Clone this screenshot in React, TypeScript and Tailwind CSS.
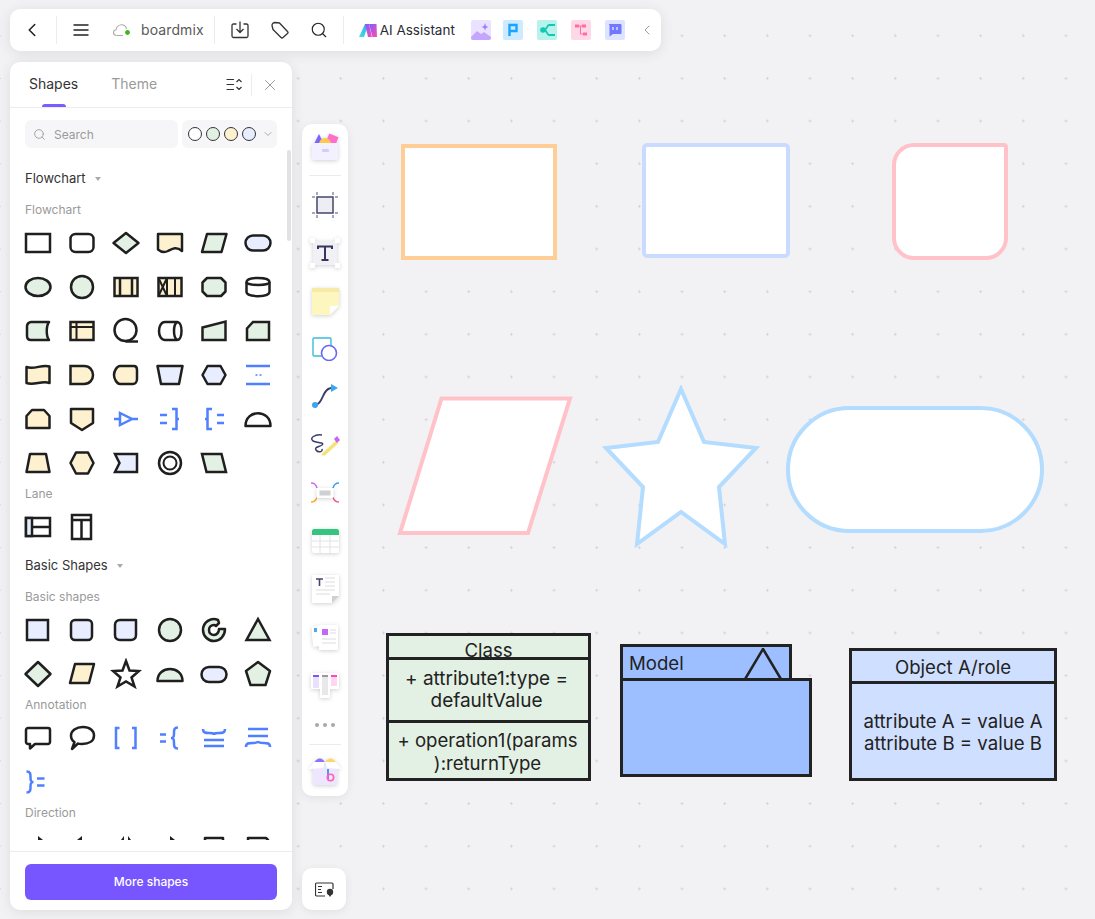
import type { ReactNode } from "react";
import { ChevronDown, ChevronLeft, Search, X } from "lucide-react";

const G = "#e3f1e4";
const Y = "#fdf1d0";
const B = "#e8eeff";
const W = "#ffffff";
const L = "#4f80ff";

function Shape({ children }: { children: ReactNode }) {
  return (
    <div className="flex h-11 w-11 items-center justify-center">
      <svg viewBox="0 0 32 32" className="h-8 w-8" fill="none" stroke="#1f1f1f" strokeWidth={2.500} strokeLinejoin="round">
        {children}
      </svg>
    </div>
  );
}

function Blue({ d }: { d: string }) {
  return <path d={d} stroke={L} strokeWidth={2.500} fill="none" strokeLinejoin="miter" />;
}

const flowchart: ReactNode[] = [
  <rect x="4" y="7" width="24" height="18" fill={W} strokeLinejoin="miter" />,
  <rect x="4.5" y="7" width="23" height="18" rx="5" fill={W} />,
  <path d="M3.5 16 16 6 28.5 16 16 26Z" fill={G} />,
  <path d="M4 7H28V24C22 19 18 22 14 24 10 26 7 25 4 22.5Z" fill={Y} />,
  <path d="M9 7H28.5L23.5 25H4Z" fill={G} />,
  <rect x="3.5" y="8.5" width="25" height="15" rx="7.5" fill={B} />,
  <ellipse cx="16" cy="16" rx="12.5" ry="9" fill={G} />,
  <circle cx="16" cy="16" r="11" fill={G} />,
  <>
    <rect x="4.5" y="7" width="23" height="18" fill={Y} strokeLinejoin="miter" />
    <path d="M10 7V25M22 7V25" />
  </>,
  <>
    <rect x="4.5" y="7" width="23" height="18" fill={Y} strokeLinejoin="miter" />
    <path d="M13 7V25M21 7V25M4.5 7 13 25M13 7 4.5 25" strokeWidth={2} />
  </>,
  <path d="M9 7H23L27.5 11.5V20.5L23 25H9L4.5 20.5V11.5Z" fill={G} />,
  <>
    <path d="M4.5 11C4.5 5.500 27.500 5.500 27.500 11V21C27.500 26.500 4.500 26.500 4.500 21Z" fill={W} />
    <path d="M4.5 11C4.5 15 27.500 15 27.500 11" />
  </>,
  <path d="M9 7H27C24 11 24 21 27 25H9C7 25 5 24 5 21V11C5 9 7 7 9 7Z" fill={G} />,
  <>
    <rect x="4.5" y="7" width="23" height="18" fill={Y} strokeLinejoin="miter" />
    <path d="M4.500 12H27.500M10.500 7V25" strokeWidth={2} />
  </>,
  <>
    <circle cx="15.500" cy="15" r="11" fill={W} />
    <path d="M15.500 26.500H28" />
  </>,
  <>
    <path d="M11 7H23C29 7 29 25 23 25H11C3 25 3 7 11 7Z" fill={W} />
    <path d="M23 7C19 10 19 22 23 25" />
  </>,
  <path d="M4.500 12.500 27.500 6.500V25H4.500Z" fill={G} strokeLinejoin="miter" />,
  <path d="M11 7H27V25H5V13.500Z" fill={G} strokeLinejoin="miter" />,
  <path d="M4.500 8C12 11 20 5 27.500 7.500V24C20 21 12 27 4.500 24Z" fill={Y} />,
  <path d="M4.500 7H18C30 7 30 25 18 25H4.500Z" fill={Y} strokeLinejoin="miter" />,
  <path d="M10 7H24C26 7 27 9 27 11V20C27 23 25 25 23 25H10C7 25 4 20 4 16 4 12 7 7 10 7Z" fill={Y} />,
  <path d="M3.500 7H28.500L25 25H7Z" fill={B} />,
  <path d="M9.500 7H22.500L27.500 16 22.500 25H9.500L4.500 16Z" fill={B} />,
  <>
    <Blue d="M4 7H28M4 25H28" />
    <path d="M13.500 16H15.500M17.500 16H19.500" stroke={L} strokeWidth={1.600} />
  </>,
  <path d="M10 7H22L27.500 13V25H4.500V13Z" fill={Y} />,
  <path d="M5 6H27V20L16 27 5 20Z" fill={Y} />,
  <>
    <Blue d="M4 16H10M22 16H28M10 10 22 16 10 22Z" />
  </>,
  <>
    <Blue d="M6 12H13M6 20H13M18 6H22.500V26H18M22.500 16H25" />
  </>,
  <>
    <Blue d="M14 6H9.500V26H14M9.500 16H7M19 12H26M19 20H26" />
  </>,
  <path d="M3.500 23C3.500 6 28.500 6 28.500 23Z" fill={W} />,
  <path d="M8 7H24L27.500 25H4.500Z" fill={Y} />,
  <path d="M10 5.500H22L27.500 16 22 26.500H10L4.500 16Z" fill={Y} />,
  <path d="M5 7H27V25H5L9.500 16Z" fill={B} strokeLinejoin="miter" />,
  <>
    <circle cx="16" cy="16" r="11" fill={W} />
    <circle cx="16" cy="16" r="6.500" fill={W} strokeWidth={2} />
  </>,
  <path d="M4 7H23.500L28 25H8.500Z" fill={G} strokeLinejoin="miter" />,
];

const lane: ReactNode[] = [
  <>
    <rect x="4" y="7" width="24" height="18" fill={W} strokeLinejoin="miter" />
    <rect x="4" y="7" width="6" height="18" fill={B} strokeLinejoin="miter" />
    <path d="M10 16H28" />
  </>,
  <>
    <rect x="6" y="4" width="19" height="24" fill={W} strokeLinejoin="miter" />
    <path d="M6 9H25M15.500 9V28" />
  </>,
];

const basic: ReactNode[] = [
  <rect x="5" y="6" width="21" height="20" fill={B} strokeLinejoin="miter" />,
  <rect x="5" y="6" width="21" height="20" rx="4" fill={B} />,
  <path d="M10 6H26V21C26 24 24 26 21 26H10C7 26 5 24 5 21V11C5 8 7 6 10 6Z" fill={B} />,
  <circle cx="16" cy="16" r="11" fill={G} />,
  <path d="M20 6C13 3 5 8 5 16 5 22 10 27 16 27 22 27 27 22 27 15H21C21 18 19 21 16 21 13 21 11 19 11 16 11 13 13 11 16 11 17 11 18 12 18 12L21 9Z" fill={G} />,
  <path d="M16 5 27.500 26H4.500Z" fill={G} strokeLinejoin="miter" />,
  <path d="M3.500 16 16 4 28.500 16 16 28Z" fill={G} />,
  <path d="M9 6H28L23 25H4Z" fill={Y} />,
  <path d="M16 3 19.500 12.500 29 13 21.500 19.500 24.500 28.500 16 23.500 7.500 28.500 10.500 19.500 3 13 12.500 12.500Z" fill={W} strokeLinejoin="miter" />,
  <path d="M3.500 23C3.500 7 28.500 7 28.500 23Z" fill={G} />,
  <rect x="3.500" y="9" width="25" height="15" rx="7.500" fill={B} />,
  <path d="M16 4 28 13 23.500 27H8.500L4 13Z" fill={G} />,
];

const annotation: ReactNode[] = [
  <path d="M6 6H26C27.500 6 28 7 28 8V20C28 21 27 22 26 22H13L8 26.500V22H6C5 22 4 21 4 20V8C4 7 5 6 6 6Z" fill={W} />,
  <path d="M17 5C24 5 28 9 28 13.500 28 19 23 22 16 22 14 22 13 22 12 21.500L6 27 8.500 20C6 18.500 5 16 5 13.500 5 9 10 5 17 5Z" fill={W} />,
  <Blue d="M9.500 6H6V26H9.500M22 6H25.500V26H22" />,
  <Blue d="M6 12.500H12M6 19.500H12M24 5.500C20 5.500 20 8 20 11 20 14 20 16 17 16 20 16 20 18 20 21 20 24 20 26.500 24 26.500" />,
  <Blue d="M5 7C5 11 8 11 11 11 14 11 16 11 16 13 16 11 18 11 21 11 24 11 27 11 27 7M6 18H26M6 24H26" />,
  <Blue d="M6 7H26M6 14H26M4 25C4 21 7 21 10 21 13 21 16 21 16 19 16 21 19 21 22 21 25 21 28 21 28 25" />,
  <Blue d="M4.500 5.500C8.500 5.500 8.500 8 8.500 11 8.500 14 8.500 16 11.500 16 8.500 16 8.500 18 8.500 21 8.500 24 8.500 26.500 4.500 26.500M15 12.500H22.500M15 19.500H22.500" />,
];

const direction: ReactNode[] = [
  <path d="M16 4 26 12H16Z" fill="#1f1f1f" stroke="none" />,
  <path d="M16 4 6 12H16Z" fill="#1f1f1f" stroke="none" />,
  <path d="M14 4 8 12H14ZM18 4 24 12H18Z" fill="#1f1f1f" stroke="none" />,
  <path d="M16 4 26 12H16Z" fill="#1f1f1f" stroke="none" />,
  <path d="M7 6H25V20H7Z" fill={W} />,
  <path d="M6 6H24L26 8V20H6Z" fill={W} />,
];

function ShapeGrid({ items }: { items: ReactNode[] }) {
  return (
    <div className="grid grid-cols-[repeat(6,44px)] pl-[6px]">
      {items.map((s, i) => (
        <Shape key={i}>{s}</Shape>
      ))}
    </div>
  );
}

function Heading({ children, caretAt, className }: { children: string; caretAt?: boolean; className?: string }) {
  return (
    <div className={`flex h-5 items-center gap-[9px] pl-[15px] text-[13px] text-[#333] ${className ?? ""}`}>
      {children}
      {caretAt && <span className="h-0 w-0 border-x-[3px] border-t-4 border-x-transparent border-t-[#aaa]" />}
    </div>
  );
}

function SubLabel({ children, className }: { children: string; className?: string }) {
  return <div className={`flex h-5 items-center pb-[2px] pl-[15px] text-xs text-[#9a9a9a] ${className ?? ""}`}>{children}</div>;
}

function Divider() {
  return <div className="h-[28px] w-px bg-[#ececee]" />;
}

function TopBar() {
  return (
    <div className="flex h-[42px] w-[651px] items-center rounded-[10px] bg-white pl-[11px] text-[#222] shadow-[0_2px_14px_rgba(0,0,0,0.09)]">
      <ChevronLeft size={22} strokeWidth={1.700} />
      <div className="ml-[13px]"><Divider /></div>
      <svg viewBox="0 0 16 12" className="ml-[16px] h-3 w-4" stroke="#222" strokeWidth={1.300}>
        <path d="M.5 1H15.500M.5 6H15.500M.5 11H15.500" />
      </svg>
      <svg viewBox="0 0 18 13" className="ml-[24px] h-[13px] w-[18px]" fill="none">
        <path d="M3.500 11.500C1.500 11.500.5 10 .5 8.500.5 7 1.500 6 3 5.800 3.500 3 6 .8 8.500.8 11 .8 13 2.500 13.500 5" stroke="#aaa" strokeWidth={1.100} />
        <path d="M3.500 11.500H10" stroke="#aaa" strokeWidth={1.100} />
        <circle cx="14.500" cy="8.500" r="2.400" fill="#3eb61b" />
      </svg>
      <span className="ml-[10px] text-sm tracking-[0.1px] text-[#5a5a5a]">boardmix</span>
      <div className="ml-[10px]"><Divider /></div>
      <svg viewBox="0 0 18 18" className="ml-[16px] h-[18px] w-[18px]" fill="none" stroke="#333" strokeWidth={1.300}>
        <path d="M5.500 3H2.500C1.500 3 1 3.500 1 4.500V15C1 16 1.500 16.500 2.500 16.500H15.500C16.500 16.500 17 16 17 15V4.500C17 3.500 16.500 3 15.500 3H12.500" />
        <path d="M9 .5V11.500M5.500 8 9 11.500 12.500 8" />
      </svg>
      <svg viewBox="0 0 18 18" className="ml-[22px] h-[18px] w-[18px]" fill="none" stroke="#333" strokeWidth={1.300} strokeLinejoin="round">
        <path d="M1 4.500C1 2.500 2.500 1.500 4 1.500L8.500 2 16.500 10.500C17 11 17 12 16.500 12.500L12 16.500C11.500 17 10.500 17 10 16.500L2 8.500Z" />
      </svg>
      <Search size={18} strokeWidth={1.500} className="ml-[21px] text-[#222]" />
      <div className="ml-[15px]"><Divider /></div>
      <svg viewBox="0 0 18 13" className="ml-[15px] h-[13px] w-[18px]">
        <defs>
          <linearGradient id="aiL" x1="0" y1="1" x2="1" y2="0">
            <stop offset="0" stopColor="#3fe6d8" />
            <stop offset="1" stopColor="#3f9dff" />
          </linearGradient>
          <linearGradient id="aiR" x1="0" y1="0" x2="1" y2="1">
            <stop offset="0" stopColor="#7a5cff" />
            <stop offset="1" stopColor="#ff4fb0" />
          </linearGradient>
        </defs>
        <path d="M0 13 6 0H9.500L5 13Z" fill="url(#aiL)" />
        <path d="M6 0H10L13 13H9Z" fill="url(#aiR)" />
        <path d="M10 0H17.500L18 13H13.500Z" fill="url(#aiR)" />
      </svg>
      <span className="ml-[3px] text-[13.500px] text-[#2b2b33]">AI Assistant</span>
      <div className="ml-[16px] flex h-5 w-5 items-center justify-center overflow-hidden rounded-[2px] bg-[#ebe2ff]">
        <svg viewBox="0 0 20 20" className="h-5 w-5">
          <path d="M0 20V17L6 11 10 14 13 12 20 17V20Z" fill="#c4a6ff" />
          <path d="M14 3 15 6 17.500 7 15 8 14 10.500 13 8 10.500 7 13 6Z" fill="#9d7cff" />
        </svg>
      </div>
      <div className="ml-3 flex h-5 w-5 items-center justify-center rounded-[2px] bg-[#cdeaff]">
        <svg viewBox="0 0 20 20" className="h-5 w-5" fill="none" stroke="#1aa3ff" strokeWidth={2.400}>
          <path d="M6.500 16V5H13.500V11H6.500" />
        </svg>
      </div>
      <div className="ml-[14px] flex h-5 w-5 items-center justify-center rounded-[2px] bg-[#b7f3ea]">
        <svg viewBox="0 0 20 20" className="h-5 w-5" fill="none" stroke="#10c8b4" strokeWidth={1.800}>
          <path d="M18 5H12C10 5 10 10 7 10 10 10 10 15 12 15H18" />
          <circle cx="6" cy="10" r="2.800" fill="#10c8b4" stroke="none" />
        </svg>
      </div>
      <div className="ml-[14px] flex h-5 w-5 items-center justify-center rounded-[2px] bg-[#ffd8e7]">
        <svg viewBox="0 0 20 20" className="h-5 w-5" fill="#ff6c9f" stroke="#ff6c9f">
          <rect x="4" y="4.500" width="4" height="3" stroke="none" />
          <rect x="11" y="4.500" width="4" height="3" stroke="none" />
          <rect x="12" y="12.500" width="4" height="3" stroke="none" />
          <path d="M8 6H11M9.500 6V14H12" fill="none" />
        </svg>
      </div>
      <div className="ml-[14px] flex h-5 w-5 items-center justify-center rounded-[2px] bg-[#dde4ff]">
        <svg viewBox="0 0 20 20" className="h-5 w-5">
          <path d="M4.500 4H15.500C16 4 16.500 4.500 16.500 5V13C16.500 13.500 16 14 15.500 14H8L4.500 16.500V5C3.500 4.500 4 4 4.500 4Z" fill="#7377ff" />
          <path d="M8 7V10M12 7V10" stroke="#dde4ff" strokeWidth={1.400} />
        </svg>
      </div>
      <ChevronLeft size={16} strokeWidth={1.500} className="ml-[14px] text-[#9b9b9b]" />
    </div>
  );
}

function ShapesPanel() {
  return (
    <div className="relative flex h-[848px] w-[282px] flex-col overflow-hidden rounded-[10px] bg-white shadow-[0_2px_14px_rgba(0,0,0,0.09)]">
      <div className="flex h-[46px] shrink-0 items-center border-b border-[#ececee] pl-[19px] pr-[13px] text-sm">
        <div className="relative flex h-full items-center pb-[2px] text-[#333]">
          Shapes
          <span className="absolute bottom-0 left-[13px] h-[3px] w-6 rounded-t-sm bg-[#7b5cff]" />
        </div>
        <span className="ml-[33px] pb-[2px] text-[#9a9a9a]">Theme</span>
        <svg viewBox="0 0 16 13" className="ml-auto h-[13px] w-4" fill="none" stroke="#333" strokeWidth={1.200}>
          <path d="M.5 1.500H8M.5 6.500H8M.5 11.500H8M10.500 4 13 1.500 15.500 4M10.500 9 13 11.500 15.500 9" />
        </svg>
        <div className="ml-[9px] h-[22px] w-px bg-[#ececee]" />
        <X size={18} strokeWidth={1.300} className="ml-[9px] text-[#9a9a9a]" />
      </div>
      <div className="flex shrink-0 gap-1 px-[15px] pt-[12px]">
        <div className="flex h-7 w-[153px] items-center rounded-md bg-[#f6f6f8] pl-2 text-xs text-[#9a9a9a]">
          <Search size={13} strokeWidth={1.600} />
          <span className="ml-2 pt-px">Search</span>
        </div>
        <div className="flex h-7 w-[95px] items-center rounded-md bg-[#f6f6f8] pl-[6px]">
          <span className="h-[14px] w-[14px] rounded-full border border-[#333] bg-white" />
          <span className="ml-[4px] h-[14px] w-[14px] rounded-full border border-[#333] bg-[#e3f1e4]" />
          <span className="ml-[4px] h-[14px] w-[14px] rounded-full border border-[#333] bg-[#fdf1d0]" />
          <span className="ml-[4px] h-[14px] w-[14px] rounded-full border border-[#333] bg-[#e8eeff]" />
          <ChevronDown size={12} className="ml-[6px] text-[#aaa]" />
        </div>
      </div>
      <div className="h-[692px] shrink-0 overflow-hidden pt-[21px]">
        <Heading caretAt>Flowchart</Heading>
        <SubLabel className="mt-3">Flowchart</SubLabel>
        <ShapeGrid items={flowchart} />
        <SubLabel>Lane</SubLabel>
        <ShapeGrid items={lane} />
        <Heading caretAt className="mt-[7px]">Basic Shapes</Heading>
        <SubLabel className="mt-3">Basic shapes</SubLabel>
        <ShapeGrid items={basic} />
        <SubLabel>Annotation</SubLabel>
        <ShapeGrid items={annotation} />
        <SubLabel>Direction</SubLabel>
        <div className="mt-[2px]" />
        <ShapeGrid items={direction} />
      </div>
      <div className="absolute right-[1px] top-[88px] h-[91px] w-1 rounded-sm bg-[#e2e2e5]" />
      <div className="mt-[11px] flex flex-1 flex-col border-t border-[#ececee] px-[15px] pt-[12px]">
        <button className="h-9 rounded-md bg-[#7856ff] text-xs font-medium text-white">More shapes</button>
      </div>
    </div>
  );
}

function RailItem({ children }: { children: ReactNode }) {
  return <div className="flex h-12 w-full shrink-0 items-center justify-center">{children}</div>;
}

function ToolRail() {
  const soft = "drop-shadow-[0_1px_2px_rgba(0,0,0,0.18)]";
  return (
    <div className="flex h-[848px] w-[46px] shrink-0 flex-col justify-between pt-[62px]">
      <div className="flex h-[672px] flex-col items-center rounded-[10px] bg-white shadow-[0_2px_10px_rgba(0,0,0,0.07)]">
        <div className="flex h-[46px] w-full shrink-0 items-center justify-center">
          <svg viewBox="0 0 28 28" className={`h-7 w-7 ${soft}`}>
            <path d="M2 13 8 1 14 13Z" fill="#7d62ff" />
            <rect x="16" y="2" width="10" height="10" transform="rotate(22 21 7)" fill="#ff6fc8" />
            <circle cx="14" cy="11" r="6" fill="#ffc94d" />
            <rect x="1" y="10" width="26" height="17" rx="2" fill="#f3f0ff" />
            <rect x="11" y="16" width="7" height="3" rx="1" fill="#d4ccff" />
          </svg>
        </div>
        <div className="mb-[5px] mt-[5px] h-px w-8 bg-[#ececee]" />
        <RailItem>
          <svg viewBox="0 0 26 26" className="h-[26px] w-[26px]" fill="#eeeef2" stroke="#45456e" strokeWidth={1.500}>
            <rect x="5" y="5" width="16" height="16" />
            <path d="M5 0V3M21 0V3M5 23V26M21 23V26M0 5H3M0 21H3M23 5H26M23 21H26" stroke="#8a8aa8" />
          </svg>
        </RailItem>
        <RailItem>
          <svg viewBox="0 0 30 30" className={`h-[30px] w-[30px] ${soft}`}>
            <rect x="3" y="3" width="24" height="24" fill="#f1f1f5" />
            <path d="M0 0H5V5H0ZM25 0H30V5H25ZM0 25H5V30H0ZM25 25H30V30H25Z" fill="#fff" />
            <path d="M8 11V8.500H22V11M15 8.500V22M11.500 22H18.500" fill="none" stroke="#353560" strokeWidth={2} />
          </svg>
        </RailItem>
        <RailItem>
          <svg viewBox="0 0 27 27" className={`h-[27px] w-[27px] ${soft}`}>
            <path d="M0 0H27V18L18 27H0Z" fill="#fdf6bf" />
            <rect width="27" height="4" fill="#f6eaa6" />
            <path d="M18 27V18H27Z" fill="#fff" />
          </svg>
        </RailItem>
        <RailItem>
          <svg viewBox="0 0 26 24" className="h-6 w-[26px]" fill="#fff">
            <rect x="1" y="1" width="18" height="18" rx="1" stroke="#3dbcdc" strokeWidth={1.400} />
            <circle cx="17" cy="16" r="7.500" stroke="#6a66f5" strokeWidth={1.600} />
          </svg>
        </RailItem>
        <RailItem>
          <svg viewBox="0 0 28 26" className="h-[26px] w-7" fill="none">
            <path d="M4 21C12 21 11 5 20 4" stroke="#3c3c68" strokeWidth={1.800} />
            <circle cx="4" cy="21" r="3" fill="#3aa5f0" />
            <path d="M20 0 27 4 20 8Z" fill="#3aa5f0" />
          </svg>
        </RailItem>
        <RailItem>
          <svg viewBox="0 0 30 24" className="h-6 w-[30px]" fill="none">
            <path d="M12 2C5 1 -1 5 3 8 7 10 15 9 12 12 9 14 4 14 6 17 8 20 13 19 12 16" stroke="#3c3c68" strokeWidth={1.500} />
            <path d="M12 20 26 7 29 10 15 23 11 23Z" fill="#f7e27a" stroke="#fff" />
            <path d="M24 6 27 3 30 7 27 10Z" fill="#c866f0" />
          </svg>
        </RailItem>
        <RailItem>
          <svg viewBox="0 0 30 22" className="h-[22px] w-[30px]" fill="none" strokeWidth={1.500}>
            <path d="M1 1C4 1 6 2 7 6" stroke="#c56df0" />
            <path d="M29 1C26 1 24 2 23 6" stroke="#3a9cf5" />
            <path d="M1 20C4 20 6 19 7 15" stroke="#f5b13a" />
            <path d="M29 20C26 20 24 19 23 15" stroke="#f0629d" />
            <rect x="6.500" y="6" width="17" height="10" rx="1" fill="#fff" className={soft} />
            <rect x="9.500" y="8.500" width="11" height="5" fill="#d0d0d3" />
          </svg>
        </RailItem>
        <RailItem>
          <svg viewBox="0 0 27 24" className={`h-6 w-[27px] ${soft}`} fill="none">
            <rect width="27" height="24" rx="2" fill="#fff" />
            <path d="M2 0H25C26 0 27 1 27 2V6H0V2C0 1 1 0 2 0Z" fill="#36c57f" />
            <path d="M0 12H27M0 18H27M8 6V24M18 6V24" stroke="#e2e2e5" />
          </svg>
        </RailItem>
        <RailItem>
          <svg viewBox="0 0 27 28" className={`h-7 w-[27px] ${soft}`} fill="none">
            <path d="M0 0H27V21L20 28H0Z" fill="#fff" />
            <path d="M20 28V21H27Z" fill="#cfcfd2" />
            <path d="M4 4H11M7.500 4V11" stroke="#45456e" strokeWidth={1.600} />
            <path d="M13 3H23M13 7H23M13 11H23M4 15H23M4 19H18" stroke="#dcdce0" />
          </svg>
        </RailItem>
        <RailItem>
          <svg viewBox="0 0 26 28" className={`h-7 w-[26px] ${soft}`} fill="none">
            <rect x="0" y="3" width="15" height="20" transform="rotate(-8 7 13)" fill="#fff" />
            <rect x="2" y="5" width="3" height="4" fill="#4aa8f5" />
            <rect x="7" y="2" width="19" height="25" rx="1" fill="#fff" />
            <rect x="10" y="6" width="6" height="6" fill="#c866f0" />
            <path d="M18 7H24M18 10H24M10 16H24M10 20H24" stroke="#dcdce0" />
          </svg>
        </RailItem>
        <RailItem>
          <svg viewBox="0 0 28 25" className={`h-[25px] w-7 ${soft}`}>
            <rect x="0" y="0" width="28" height="16" fill="#fff" />
            <rect x="9" y="0" width="10" height="25" rx="1" fill="#fff" />
            <rect x="2" y="2" width="6" height="2" fill="#7856ff" />
            <rect x="2" y="4" width="6" height="11" fill="#e9e2ff" />
            <rect x="11" y="2" width="6" height="2" fill="#9a9a9a" />
            <rect x="11" y="4" width="6" height="18" fill="#e8e8eb" />
            <rect x="20" y="2" width="6" height="2" fill="#ff45c0" />
            <rect x="20" y="4" width="6" height="9" fill="#ffd6ee" />
          </svg>
        </RailItem>
        <div className="flex h-8 shrink-0 items-center gap-1">
          <span className="h-1 w-1 rounded-full bg-[#a8a8ac]" />
          <span className="h-1 w-1 rounded-full bg-[#a8a8ac]" />
          <span className="h-1 w-1 rounded-full bg-[#a8a8ac]" />
        </div>
        <div className="mt-[3px] h-px w-8 bg-[#ececee]" />
        <div className="flex w-full flex-1 items-center justify-center">
          <svg viewBox="0 0 32 30" className={`h-[30px] w-[32px] ${soft}`}>
            <path d="M5 7C8 1 14 1 16 7ZM16 7C18 1 25 1 27 7Z" fill="#ffd66b" />
            <path d="M5 7C8 1 14 1 16 7Z" fill="#8c72ff" />
            <rect x="4" y="9" width="24" height="20" rx="2" fill="#ece7ff" />
            <path d="M0 13 5 6H16L14 12ZM32 13 27 6H16L18 12Z" fill="#fff" />
            <path d="M19 13V23" stroke="#3a7cf5" strokeWidth={1.600} />
            <circle cx="21.500" cy="21.500" r="3.200" fill="none" stroke="#ff5fb5" strokeWidth={1.600} />
          </svg>
        </div>
      </div>
      <div className="flex h-[42px] w-11 items-center justify-center rounded-[10px] bg-white shadow-[0_2px_10px_rgba(0,0,0,0.07)]">
        <svg viewBox="0 0 19 15" className="h-[15px] w-[19px]" fill="none" stroke="#333" strokeWidth={1.200}>
          <path d="M10 14H1.500C1 14 .5 13.500 .5 13V2C.5 1.500 1 1 1.500 1H17C17.500 1 18 1.500 18 2V7" />
          <path d="M3 4.500H7M3 7.500H6M3 10.500H7" />
          <circle cx="15" cy="10" r="3.200" fill="#333" stroke="none" />
          <path d="M13 12 15 15 17 12Z" fill="#333" stroke="none" />
        </svg>
      </div>
    </div>
  );
}

function Canvas() {
  const text = "text-[18.600px] leading-[22.500px] text-[#222]";
  return (
    <div className="relative flex-1">
      <div className="absolute left-[43px] top-[82px] h-[116px] w-[156px] border-[4.500px] border-[#ffcd96] bg-white" />
      <div className="absolute left-[284px] top-[81px] h-[115px] w-[148px] rounded-[5px] border-[4px] border-[#c9dcff] bg-white" />
      <div className="absolute left-[534px] top-[81px] h-[117px] w-[116px] rounded-[22px] rounded-tr-[4px] border-[4px] border-[#ffc2c9] bg-white" />

      <svg viewBox="0 0 176 140" className="absolute left-[39px] top-[333px] h-[140px] w-[176px]" fill="#fff" stroke="#ffc2c9" strokeWidth={4}>
        <path d="M44.500 3.500H173L131 138H3Z" />
      </svg>
      <svg viewBox="0 0 162 164" className="absolute left-[242px] top-[323px] h-[164px] w-[162px]" fill="#fff" stroke="#b3dcff" strokeWidth={4}>
        <path d="M81 4 104 57 156 63 119 102 125 159 81 127 37 159 43 102 6 63 58 57Z" strokeLinejoin="miter" />
      </svg>
      <div className="absolute left-[428px] top-[344px] h-[127px] w-[258px] rounded-full border-[4px] border-[#b3dcff] bg-white" />

      <div className={`absolute left-[28px] top-[571px] flex h-[148px] w-[205px] flex-col border-[3px] border-[#222] bg-[#e3f1e4] text-center ${text}`}>
        <div className="h-[21px] shrink-0 overflow-hidden pt-[3px]">Class</div>
        <div className="flex h-[66px] shrink-0 items-center justify-center border-y-[3px] border-[#222] pr-[4px] text-[19px]">
          <span>+ attribute1:type =<br />defaultValue</span>
        </div>
        <div className="flex flex-1 items-center justify-center pr-[2px] pt-[2px]">
          <span>+ operation1(params<br />):returnType</span>
        </div>
      </div>

      <div className={`absolute left-[262px] top-[582px] w-[192px] ${text}`}>
        <div className="relative flex h-[37px] w-[172px] items-center border-[3px] border-[#222] bg-[#9dbfff] pl-[6px] pt-[2px]">
          Model
          <svg viewBox="0 0 40 33" className="absolute bottom-[-3px] right-[6px] h-[33px] w-10" fill="none" stroke="#222" strokeWidth={2.500}>
            <path d="M20 1 38.500 32H1.500Z" />
          </svg>
        </div>
        <div className="mt-[-3px] h-[99px] border-[3px] border-[#222] bg-[#9dbfff]" />
      </div>

      <div className={`absolute left-[491px] top-[586px] flex h-[133px] w-[208px] flex-col border-[3px] border-[#222] bg-[#cfdfff] text-center ${text}`}>
        <div className="flex h-[33px] shrink-0 items-center justify-center border-b-[3px] border-[#222] pt-[2px]">Object A/role</div>
        <div className="flex flex-1 items-center justify-center pt-[2px]">
          <span>attribute A = value A<br />attribute B = value B</span>
        </div>
      </div>
    </div>
  );
}

export default function App() {
  return (
    <div className="h-[919px] w-full overflow-hidden bg-[#f2f2f5] bg-[radial-gradient(circle,#d6d6da_1px,transparent_1.300px)] bg-size-[42.67px_42.67px] bg-position-[-21.800px_14.400px] pl-[10px] pt-[9px] font-[Inter,sans-serif]">
      <TopBar />
      <div className="mt-[11px] flex gap-[10px]">
        <ShapesPanel />
        <ToolRail />
        <Canvas />
      </div>
    </div>
  );
}
